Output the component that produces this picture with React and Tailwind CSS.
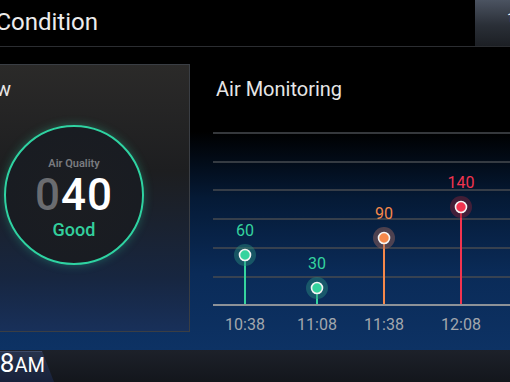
import React from 'react';

const points = [
  { time: '10:38', value: 60, x: 32, y: 135, color: '#35d39e', halo: '#2a8f7e' },
  { time: '11:08', value: 30, x: 104, y: 168, color: '#35d39e', halo: '#2a8f7e' },
  { time: '11:38', value: 90, x: 171, y: 118, color: '#f5884a', halo: '#a4685a' },
  { time: '12:08', value: 140, x: 248, y: 87, color: '#f2344f', halo: '#8c2438' },
];

const gridLines = [13, 42, 70, 99, 128, 157];

const Chart = () => (
  <svg width="297" height="220" viewBox="0 0 297 220" className="block">
    {gridLines.map((y) => (
      <line key={y} x1="0" x2="297" y1={y} y2={y} stroke="#474b51" strokeWidth="1.5" />
    ))}
    <line x1="0" x2="297" y1="185" y2="185" stroke="#8d9298" strokeWidth="2" />
    {points.map((p) => (
      <g key={p.time}>
        <line x1={p.x} x2={p.x} y1={p.y} y2="184" stroke={p.color} strokeWidth="2" />
        <circle cx={p.x} cy={p.y} r="11" fill={p.halo} opacity="0.45" />
        <circle cx={p.x} cy={p.y} r="5.5" fill={p.color} stroke="#f4f4f4" strokeWidth="1.6" />
        <text
          x={p.x}
          y={p.y - 19}
          textAnchor="middle"
          fill={p.color}
          fontSize="16"
          fontFamily="Roboto, sans-serif"
        >
          {p.value}
        </text>
        <text
          x={p.x}
          y="210"
          textAnchor="middle"
          fill="#a3a7ad"
          fontSize="16"
          fontFamily="Roboto, sans-serif"
        >
          {p.time}
        </text>
      </g>
    ))}
  </svg>
);

export default function App() {
  return (
    <div className="w-[510px] h-[382px] bg-black overflow-hidden flex flex-col font-['Roboto',sans-serif]">
      {/* Header */}
      <div className="h-[47px] shrink-0 flex border-b border-[#2b2d31]">
        <div className="flex-1 flex items-center">
          <div className="w-[98px] flex justify-end whitespace-nowrap text-[24px] text-[#ececec] pb-[2px]">
            Air Condition
          </div>
        </div>
        <div className="w-[35px] bg-[linear-gradient(180deg,#4b5361_0%,#2a2f37_55%,#1c1f24_100%)] flex items-start justify-end pt-[12px] overflow-hidden">
          <span className="text-[12px] leading-none text-white -mr-[4px]">1</span>
        </div>
      </div>

      {/* Main */}
      <div className="flex-1 flex bg-[linear-gradient(180deg,#000_0%,#000_28%,#051a36_50%,#0a2b58_75%,#0d3264_100%)]">
        {/* Overview panel */}
        <div className="w-[190px] h-[268px] mt-[17px] border-y border-r border-[#3a3e44] bg-[linear-gradient(180deg,#2b2a29_0%,#1d1e20_40%,#172640_80%,#18305a_100%)] overflow-hidden flex flex-col">
          <div className="w-[11px] h-[48px] flex justify-end items-center whitespace-nowrap text-[20px] text-[#e6e6e6]">
            Overview
          </div>
          <div className="ml-[4px] mt-[12px] pt-[6px] w-[140px] h-[140px] rounded-full border-2 border-[#2fd3a2] shadow-[0_0_10px_rgba(47,211,162,0.35)] bg-[radial-gradient(circle,#1b1d21_0%,#191c22_70%,#1a2334_100%)] flex flex-col items-center justify-center">
            <div className="text-[11px] text-[#797b7f] leading-none font-semibold">Air Quality</div>
            <div className="text-[44px] leading-none mt-[4px] tracking-[1px] font-medium">
              <span className="text-[#6a6c70]">0</span>
              <span className="text-white">40</span>
            </div>
            <div className="text-[18px] leading-none text-[#33cf9d] font-medium mt-[4px]">Good</div>
          </div>
        </div>

        {/* Air Monitoring */}
        <div className="flex-1 flex flex-col pl-[23px]">
          <div className="h-[73px] flex items-end pl-[3px] pb-[21px] text-[20px] text-[#e6e6e6] leading-none">
            Air Monitoring
          </div>
          <Chart />
        </div>
      </div>

      {/* Bottom bar */}
      <div className="h-[32px] shrink-0 flex items-end bg-[linear-gradient(180deg,#1d212a_0%,#13161c_100%)]">
        <div className="h-[31px] w-[54px] bg-[linear-gradient(180deg,#27324c_0%,#18213a_100%)] border-t border-[#3d4a68] [clip-path:polygon(0_0,42px_0,100%_100%,0_100%)] flex items-end overflow-hidden pb-[6px]">
          <div className="w-[45px] flex justify-end items-baseline whitespace-nowrap text-white leading-none">
            <span className="text-[26px]">10:38</span>
            <span className="text-[20px]">AM</span>
          </div>
        </div>
      </div>
    </div>
  );
}
